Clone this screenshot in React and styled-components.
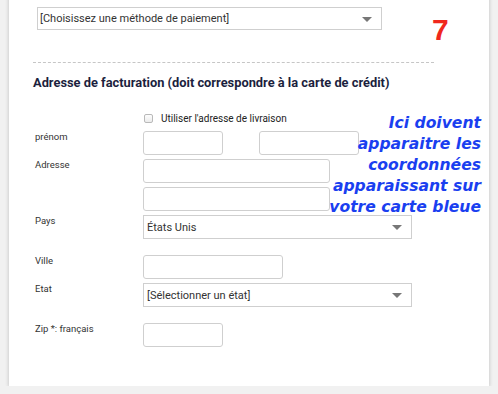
import React from "react";
import styled, { createGlobalStyle } from "styled-components";

const GlobalStyle = createGlobalStyle`
  html, body {
    margin: 0;
    padding: 0;
    background: #f1f1f1;
    overflow: hidden;
  }
  body {
    font-family: Roboto, "Liberation Sans", Arial, sans-serif;
  }
`;

const Card = styled.section`
  position: relative;
  box-sizing: border-box;
  width: 480px;
  height: 396px;
  margin: -10px 0 0 9px;
  padding: 17px 0 0 24px;
  background: #fff;
  box-shadow: 0 1px 4px rgba(0, 0, 0, 0.22);
`;

const TopRow = styled.div`
  display: flex;
  align-items: flex-start;
  height: 23px;
`;

const Select = styled.div`
  position: relative;
  box-sizing: border-box;
  display: flex;
  align-items: center;
  width: ${(p) => p.width}px;
  height: ${(p) => p.height || 24}px;
  margin-left: ${(p) => p.indent || 0}px;
  padding-left: ${(p) => p.pad || 3}px;
  border: 1px solid #cfcfcf;
  background: #fff;
  font-size: 11px;
  color: #333;
  white-space: nowrap;
`;

const Arrow = styled.span`
  position: absolute;
  right: 9px;
  top: 50%;
  margin-top: -2px;
  width: 0;
  height: 0;
  border-left: 5px solid transparent;
  border-right: 5px solid transparent;
  border-top: 5px solid #777;
`;

const Step = styled.span`
  margin: 0 0 0 50px;
  padding-top: 8px;
  font-family: "Liberation Sans", Arial, sans-serif;
  font-weight: 700;
  font-size: 30px;
  line-height: 30px;
  color: #f0271c;
`;

const Divider = styled.hr`
  width: 401px;
  margin: 32px 0 0;
  border: 0;
  border-top: 1px dashed #c6c6c6;
`;

const Heading = styled.h2`
  margin: 12px 0 0;
  font-size: 12.85px;
  line-height: 16px;
  font-weight: 700;
  color: #1c1f3e;
  white-space: nowrap;
`;

const CheckRow = styled.label`
  display: flex;
  align-items: center;
  gap: 8px;
  margin: 21px 0 0 111px;
  height: 12px;
  font-size: 10px;
  color: #222;
`;

const Box = styled.span`
  box-sizing: border-box;
  width: 9px;
  height: 9px;
  border: 1px solid #b9b9b9;
  border-radius: 2px;
  background: linear-gradient(#fdfdfd, #ececec);
`;

const Form = styled.div`
  display: flex;
  flex-direction: column;
  margin-top: 7px;
`;

const Row = styled.div`
  display: grid;
  grid-template-columns: 108px 1fr;
  margin-top: ${(p) => p.gap || 0}px;
  padding-left: 2px;
`;

const Label = styled.span`
  font-size: 9.5px;
  line-height: 11px;
  color: #333;
`;

const Fields = styled.div`
  display: flex;
  flex-direction: ${(p) => (p.stack ? "column" : "row")};
  gap: ${(p) => p.spacing || 4}px;
`;

const Input = styled.div`
  box-sizing: border-box;
  width: ${(p) => p.width}px;
  height: 24px;
  border: 1px solid #cfcfcf;
  border-radius: 3px;
  background: #fff;
`;

const Note = styled.p`
  position: absolute;
  top: 123px;
  right: 8px;
  margin: 0;
  text-align: right;
  font-family: "DejaVu Sans", sans-serif;
  font-style: italic;
  font-weight: 700;
  font-size: 15.6px;
  line-height: 21px;
  color: #1a3ff0;
`;

export default function App() {
  return (
    <>
      <GlobalStyle />
      <Card>
        <TopRow>
          <Select width={345} height={23} indent={4} pad={2}>
            [Choisissez une méthode de paiement]
            <Arrow />
          </Select>
          <Step>7</Step>
        </TopRow>
        <Divider />
        <Heading>Adresse de facturation (doit correspondre à la carte de crédit)</Heading>
        <CheckRow>
          <Box />
          Utiliser l'adresse de livraison
        </CheckRow>
        <Form>
          <Row>
            <Label>prénom</Label>
            <Fields spacing={36}>
              <Input width={80} />
              <Input width={100} />
            </Fields>
          </Row>
          <Row gap={4}>
            <Label>Adresse</Label>
            <Fields stack>
              <Input width={187} />
              <Input width={187} />
            </Fields>
          </Row>
          <Row gap={4}>
            <Label>Pays</Label>
            <Select width={269}>
              États Unis
              <Arrow />
            </Select>
          </Row>
          <Row gap={16}>
            <Label>Ville</Label>
            <Input width={140} />
          </Row>
          <Row gap={4}>
            <Label>Etat</Label>
            <Select width={269}>
              [Sélectionner un état]
              <Arrow />
            </Select>
          </Row>
          <Row gap={16}>
            <Label>Zip *: français</Label>
            <Input width={80} />
          </Row>
        </Form>
        <Note>
          Ici doivent
          <br />
          apparaitre les
          <br />
          coordonnées
          <br />
          apparaissant sur
          <br />
          votre carte bleue
        </Note>
      </Card>
    </>
  );
}
